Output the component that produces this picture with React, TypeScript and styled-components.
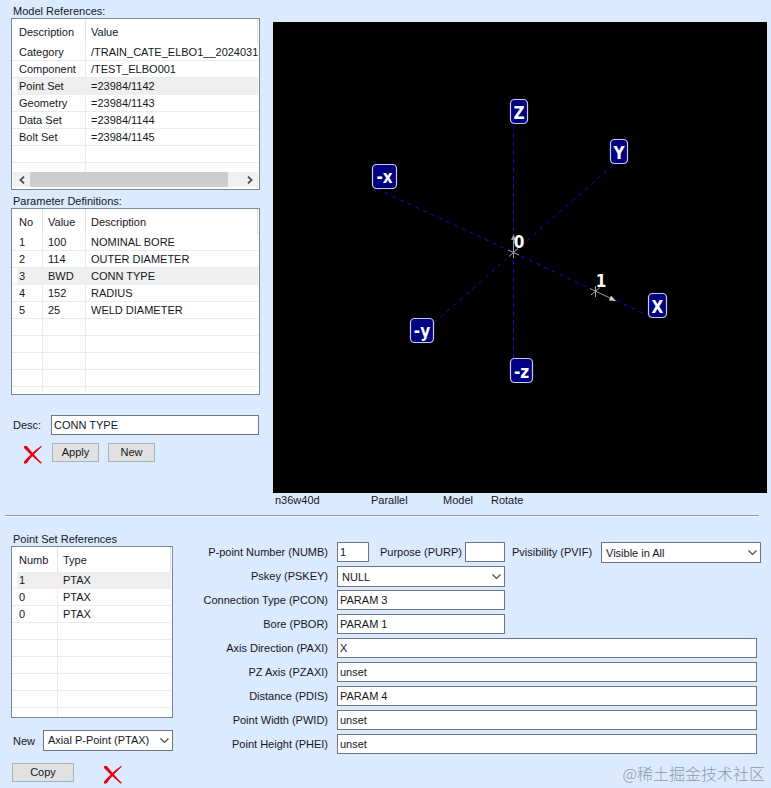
import React, { useState } from "react";
import styled, { createGlobalStyle, css } from "styled-components";

const GlobalStyle = createGlobalStyle`
  *, *::before, *::after { box-sizing: border-box; }
  body {
    margin: 0;
    background: #dbeafe;
    color: #15171c;
    font: 11px/14px "Liberation Sans", Arial, sans-serif;
  }
  button, input, select { font: inherit; color: inherit; margin: 0; }
`;

const LINE = "#ebebeb";
const EDGE = "#7a8799";

const Page = styled.main`
  position: relative;
  padding: 4px 4px 6px 11px;
`;

const Upper = styled.section`
  display: grid;
  grid-template-columns: 249px minmax(0, 1fr);
  column-gap: 13px;
`;

const Lower = styled.section`
  display: grid;
  grid-template-columns: 162px minmax(0, 1fr);
  padding-top: 15px;
`;

const Stack = styled.div`
  display: flex;
  flex-direction: column;
`;

const Caption = styled.h2`
  margin: 0;
  padding-left: 2px;
  font-size: 11px;
  font-weight: normal;
  line-height: 14px;
`;

const Frame = styled.div<{ $gapAfter?: number }>`
  border: 1px solid ${EDGE};
  background: #fff;
  overflow: hidden;
  margin-bottom: ${(p) => p.$gapAfter ?? 0}px;
`;

const Grid = styled.table`
  width: calc(100% - 1px);
  table-layout: fixed;
  border-collapse: separate;
  border-spacing: 0;
`;

const cell = css`
  padding: 0 0 0 5px;
  text-align: left;
  font-weight: normal;
  white-space: nowrap;
  overflow: hidden;
  border-right: 1px solid ${LINE};
  &:first-child { padding-left: 7px; }
`;

const Head = styled.th`
  ${cell}
  height: 25px;
  border-right-color: #e2e2e2;
`;

const Cell = styled.td`
  ${cell}
  height: 17px;
  line-height: 16px;
  border-bottom: 1px solid ${LINE};
  &:last-child { border-right: 0; }
`;

const Row = styled.tr<{ $selected?: boolean }>`
  ${(p) =>
    p.$selected &&
    css`
      ${Cell} {
        background: #efefef;
        border-color: #efefef;
      }
      ${Cell}:first-child { box-shadow: inset 5px 0 #fff; }
    `}
`;

const TailCell = styled(Cell)<{ $height: number }>`
  height: ${(p) => p.$height}px;
  line-height: 0;
  border-bottom: 0;
`;

const ScrollBar = styled.div`
  display: flex;
  height: 15px;
  margin: 0 1px 2px;
  background: #f0f0f0;
`;

const ScrollButton = styled.button`
  flex: none;
  display: grid;
  place-items: center;
  width: 17px;
  padding: 0;
  border: 0;
  background: none;
`;

const Track = styled.div`
  flex: 1;
  display: flex;
`;

const Thumb = styled.div`
  width: 94%;
  background: #cdcdcd;
`;

const DescRow = styled.div`
  display: flex;
  align-items: center;
  margin: 20px 1px 8px 2px;
`;

const DescLabel = styled.label`
  flex: none;
  width: 38px;
`;

const Actions = styled.div<{ $indent: number; $gap: number }>`
  display: flex;
  align-items: flex-start;
  gap: ${(p) => p.$gap}px;
  padding-left: ${(p) => p.$indent}px;
`;

const PushButton = styled.button<{ $width: number }>`
  width: ${(p) => p.$width}px;
  height: 19px;
  padding: 0;
  border: 1px solid #a9b4b8;
  background: #e1e1e1;
  line-height: 17px;
`;

const IconButton = styled.button`
  display: block;
  height: 20px;
  margin-top: 2px;
  padding: 0;
  border: 0;
  background: none;
  svg { display: block; }
`;

const TextBox = styled.input<{ $width?: number }>`
  height: 20px;
  padding: 0 2px;
  border: 1px solid #6f7580;
  border-radius: 0;
  background: #fff;
  min-width: 0;
  outline: none;
  ${(p) => (p.$width ? `flex: none; width: ${p.$width}px;` : "flex: 1;")}
`;

const SelectBox = styled.span<{ $width?: number }>`
  position: relative;
  display: block;
  height: 21px;
  ${(p) => (p.$width ? `flex: none; width: ${p.$width}px;` : "flex: 1;")}

  select {
    display: block;
    width: 100%;
    height: 100%;
    padding: 0 20px 1px 4px;
    border: 1px solid #6f7580;
    border-radius: 0;
    background: #fff;
    appearance: none;
    outline: none;
  }
  svg {
    position: absolute;
    right: 4px;
    top: 8px;
    pointer-events: none;
  }
`;

const Viewer = styled.div`
  margin-top: 18px;
  background: #000;
  svg { display: block; width: 100%; height: auto; }
`;

const Status = styled.div`
  display: flex;
  padding-left: 2px;
`;

const StatusItem = styled.span<{ $width?: number }>`
  min-width: ${(p) => p.$width ?? 0}px;
`;

const Divider = styled.hr`
  height: 2px;
  margin: 8px 8px 0 -6px;
  border: 0;
  border-top: 1px solid #8b98a2;
  background: #f4f9ff;
`;

const NewRow = styled.div`
  display: flex;
  align-items: center;
  margin: 12px 0;
  padding-left: 2px;
`;

const NewLabel = styled.label`
  flex: 1;
`;

const Form = styled.form`
  padding: 10px 6px 0 0;
`;

const Field = styled.div<{ $inset?: number }>`
  display: flex;
  height: 24px;
  margin-right: ${(p) => p.$inset ?? 0}px;
  line-height: 20px;
`;

const FieldLabel = styled.label`
  flex: none;
  width: 164px;
  padding-right: 9px;
  text-align: right;
`;

const InlineLabel = styled.label<{ $width: number; $before: number }>`
  flex: none;
  width: ${(p) => p.$width}px;
  margin-left: ${(p) => p.$before}px;
`;

const Watermark = styled.div`
  position: absolute;
  right: 6px;
  bottom: 6px;
  color: #8f9bad;
  font: 300 16px/24px "Noto Sans CJK SC", sans-serif;
  pointer-events: none;
`;

const CrossIcon = () => (
  <svg width="20" height="20" viewBox="0 0 20 20" aria-hidden="true">
    <path
      d="M1 1 L4 1 C7 5 13 12 19 18 L17.5 18.5 C11 13 5 7 1 3 Z M18 1 L19 1.5 C14 6 8 12 3.5 18.5 L1 18.5 L1 16.5 C6 11 12 5 18 1 Z"
      fill="#e80010"
    />
  </svg>
);

const Chevron = () => (
  <svg width="9" height="6" viewBox="0 0 9 6" aria-hidden="true">
    <path d="M0.5 0.5 L4.5 4.5 L8.5 0.5" fill="none" stroke="#4a4a4a" strokeWidth="1.2" />
  </svg>
);

const ScrollArrow = ({ left }: { left?: boolean }) => (
  <svg width="6" height="8" viewBox="0 0 6 8" aria-hidden="true">
    <path
      d={left ? "M5 0.5 L1.5 4 L5 7.5" : "M1 0.5 L4.5 4 L1 7.5"}
      fill="none"
      stroke="#505050"
      strokeWidth="1.8"
    />
  </svg>
);

type ListProps = {
  labelledBy: string;
  columns: { title: string; width?: number }[];
  rows: string[][];
  initial: number;
  blanks: number;
  tail: number;
};

function DataGrid({ labelledBy, columns, rows, initial, blanks, tail }: ListProps) {
  const [selected, setSelected] = useState(initial);
  return (
    <Grid aria-labelledby={labelledBy}>
      <colgroup>
        {columns.map((c) => (
          <col key={c.title} width={c.width} />
        ))}
      </colgroup>
      <thead>
        <tr>
          {columns.map((c) => (
            <Head key={c.title} scope="col">{c.title}</Head>
          ))}
        </tr>
      </thead>
      <tbody>
        {rows.map((row, r) => (
          <Row key={r} $selected={r === selected} onClick={() => setSelected(r)}>
            {row.map((value, c) => (
              <Cell key={c}>{value}</Cell>
            ))}
          </Row>
        ))}
        {Array.from({ length: blanks }, (_, r) => (
          <Row key={`blank-${r}`} aria-hidden="true">
            {columns.map((c) => (
              <Cell key={c.title} />
            ))}
          </Row>
        ))}
        <Row aria-hidden="true">
          {columns.map((c) => (
            <TailCell key={c.title} $height={tail} />
          ))}
        </Row>
      </tbody>
    </Grid>
  );
}

const tags = [
  { text: "Z", x: 237.5, y: 77.5, w: 17, base: 97 },
  { text: "Y", x: 337.5, y: 117.5, w: 17, base: 137 },
  { text: "-x", x: 99.5, y: 142.5, w: 24, base: 161 },
  { text: "-y", x: 137.5, y: 296.5, w: 23, base: 315 },
  { text: "-z", x: 237.5, y: 336.5, w: 22, base: 356 },
  { text: "X", x: 375.5, y: 271.5, w: 18, base: 291 },
];

const Scene = () => (
  <svg viewBox="0 0 494 471" role="img" aria-label="3D view of the point set">
    <g stroke="#1a08dc" strokeWidth="1" strokeDasharray="4 4.5" fill="none">
      <path d="M240.5 103 V230" />
      <path d="M240.5 230 V337" />
      <path d="M104 167 L240.5 230.5" />
      <path d="M340 143 L240.5 230.5" />
      <path d="M240.5 230.5 L161 301" />
      <path d="M240.5 230.5 L318 267" />
      <path d="M343 278.5 L374 293" />
    </g>
    <g stroke="#a0a0a0" strokeWidth="1" fill="none">
      <path d="M240.5 215 V236 M235 228 L246 233 M236 234.5 L245 226.5" />
      <path d="M322.5 264 V275 M317 266.5 L340 277.5 M318 273 L327 265.5" />
    </g>
    <path d="M240.5 212 L243 218 H238 Z" fill="#9a9a9a" />
    <path d="M343 279 L336 278.5 L338 273.5 Z" fill="#d0d0d0" />
    <g fill="#000080" stroke="#c9c9ee" strokeWidth="1.2">
      {tags.map((t) => (
        <rect key={t.text} x={t.x} y={t.y} width={t.w} height="24" rx="4" />
      ))}
    </g>
    <g
      fill="#fff"
      fontFamily='"DejaVu Sans Condensed", "DejaVu Sans", sans-serif'
      fontWeight="700"
      fontSize="17"
      textAnchor="middle"
    >
      {tags.map((t) => (
        <text key={t.text} x={t.x + t.w / 2} y={t.base}>{t.text}</text>
      ))}
      <text x="246" y="226">0</text>
      <text x="328" y="265">1</text>
    </g>
  </svg>
);

const modelRows = [
  ["Category", "/TRAIN_CATE_ELBO1__20240313"],
  ["Component", "/TEST_ELBO001"],
  ["Point Set", "=23984/1142"],
  ["Geometry", "=23984/1143"],
  ["Data Set", "=23984/1144"],
  ["Bolt Set", "=23984/1145"],
];

const parameterRows = [
  ["1", "100", "NOMINAL BORE"],
  ["2", "114", "OUTER DIAMETER"],
  ["3", "BWD", "CONN TYPE"],
  ["4", "152", "RADIUS"],
  ["5", "25", "WELD DIAMETER"],
];

const pointRows = [
  ["1", "PTAX"],
  ["0", "PTAX"],
  ["0", "PTAX"],
];

const textFields = [
  { id: "pcon", label: "Connection Type (PCON)", value: "PARAM 3", width: 168 },
  { id: "pbor", label: "Bore (PBOR)", value: "PARAM 1", width: 168 },
  { id: "paxi", label: "Axis Direction (PAXI)", value: "X" },
  { id: "pzaxi", label: "PZ Axis (PZAXI)", value: "unset" },
  { id: "pdis", label: "Distance (PDIS)", value: "PARAM 4" },
  { id: "pwid", label: "Point Width (PWID)", value: "unset" },
  { id: "phei", label: "Point Height (PHEI)", value: "unset" },
];

export default function App() {
  return (
    <>
      <GlobalStyle />
      <Page>
        <Upper>
          <Stack>
            <Caption id="model-refs">Model References:</Caption>
            <Frame $gapAfter={4}>
              <DataGrid
                labelledBy="model-refs"
                columns={[{ title: "Description", width: 74 }, { title: "Value" }]}
                rows={modelRows}
                initial={2}
                blanks={1}
                tail={9}
              />
              <ScrollBar>
                <ScrollButton type="button" aria-label="Scroll left"><ScrollArrow left /></ScrollButton>
                <Track><Thumb /></Track>
                <ScrollButton type="button" aria-label="Scroll right"><ScrollArrow /></ScrollButton>
              </ScrollBar>
            </Frame>
            <Caption id="param-defs">Parameter Definitions:</Caption>
            <Frame>
              <DataGrid
                labelledBy="param-defs"
                columns={[
                  { title: "No", width: 31 },
                  { title: "Value", width: 43 },
                  { title: "Description" },
                ]}
                rows={parameterRows}
                initial={2}
                blanks={4}
                tail={7}
              />
            </Frame>
            <DescRow>
              <DescLabel htmlFor="desc">Desc:</DescLabel>
              <TextBox id="desc" defaultValue="CONN TYPE" />
            </DescRow>
            <Actions $indent={12} $gap={9}>
              <IconButton type="button" aria-label="Delete parameter"><CrossIcon /></IconButton>
              <PushButton type="button" $width={47}>Apply</PushButton>
              <PushButton type="button" $width={47}>New</PushButton>
            </Actions>
          </Stack>
          <Stack>
            <Viewer><Scene /></Viewer>
            <Status>
              <StatusItem $width={96}>n36w40d</StatusItem>
              <StatusItem $width={72}>Parallel</StatusItem>
              <StatusItem $width={48}>Model</StatusItem>
              <StatusItem>Rotate</StatusItem>
            </Status>
          </Stack>
        </Upper>
        <Divider />
        <Lower>
          <Stack>
            <Caption id="point-refs">Point Set References</Caption>
            <Frame>
              <DataGrid
                labelledBy="point-refs"
                columns={[{ title: "Numb", width: 46 }, { title: "Type" }]}
                rows={pointRows}
                initial={0}
                blanks={5}
                tail={9}
              />
            </Frame>
            <NewRow>
              <NewLabel htmlFor="new-point">New</NewLabel>
              <SelectBox $width={130}>
                <select id="new-point"><option>Axial P-Point (PTAX)</option></select>
                <Chevron />
              </SelectBox>
            </NewRow>
            <Actions $indent={1} $gap={29}>
              <PushButton type="button" $width={62}>Copy</PushButton>
              <IconButton type="button" aria-label="Delete point"><CrossIcon /></IconButton>
            </Actions>
          </Stack>
          <Form>
            <Field>
              <FieldLabel htmlFor="numb">P-point Number (NUMB)</FieldLabel>
              <TextBox id="numb" $width={32} defaultValue="1" />
              <InlineLabel htmlFor="purp" $width={85} $before={11}>Purpose (PURP)</InlineLabel>
              <TextBox id="purp" $width={40} />
              <InlineLabel htmlFor="pvif" $width={89} $before={7}>Pvisibility (PVIF)</InlineLabel>
              <SelectBox>
                <select id="pvif"><option>Visible in All</option></select>
                <Chevron />
              </SelectBox>
            </Field>
            <Field>
              <FieldLabel htmlFor="pskey">Pskey (PSKEY)</FieldLabel>
              <SelectBox $width={168}>
                <select id="pskey"><option>NULL</option></select>
                <Chevron />
              </SelectBox>
            </Field>
            {textFields.map((f) => (
              <Field key={f.id} $inset={4}>
                <FieldLabel htmlFor={f.id}>{f.label}</FieldLabel>
                <TextBox id={f.id} $width={f.width} defaultValue={f.value} />
              </Field>
            ))}
          </Form>
        </Lower>
        <Watermark>@稀土掘金技术社区</Watermark>
      </Page>
    </>
  );
}
